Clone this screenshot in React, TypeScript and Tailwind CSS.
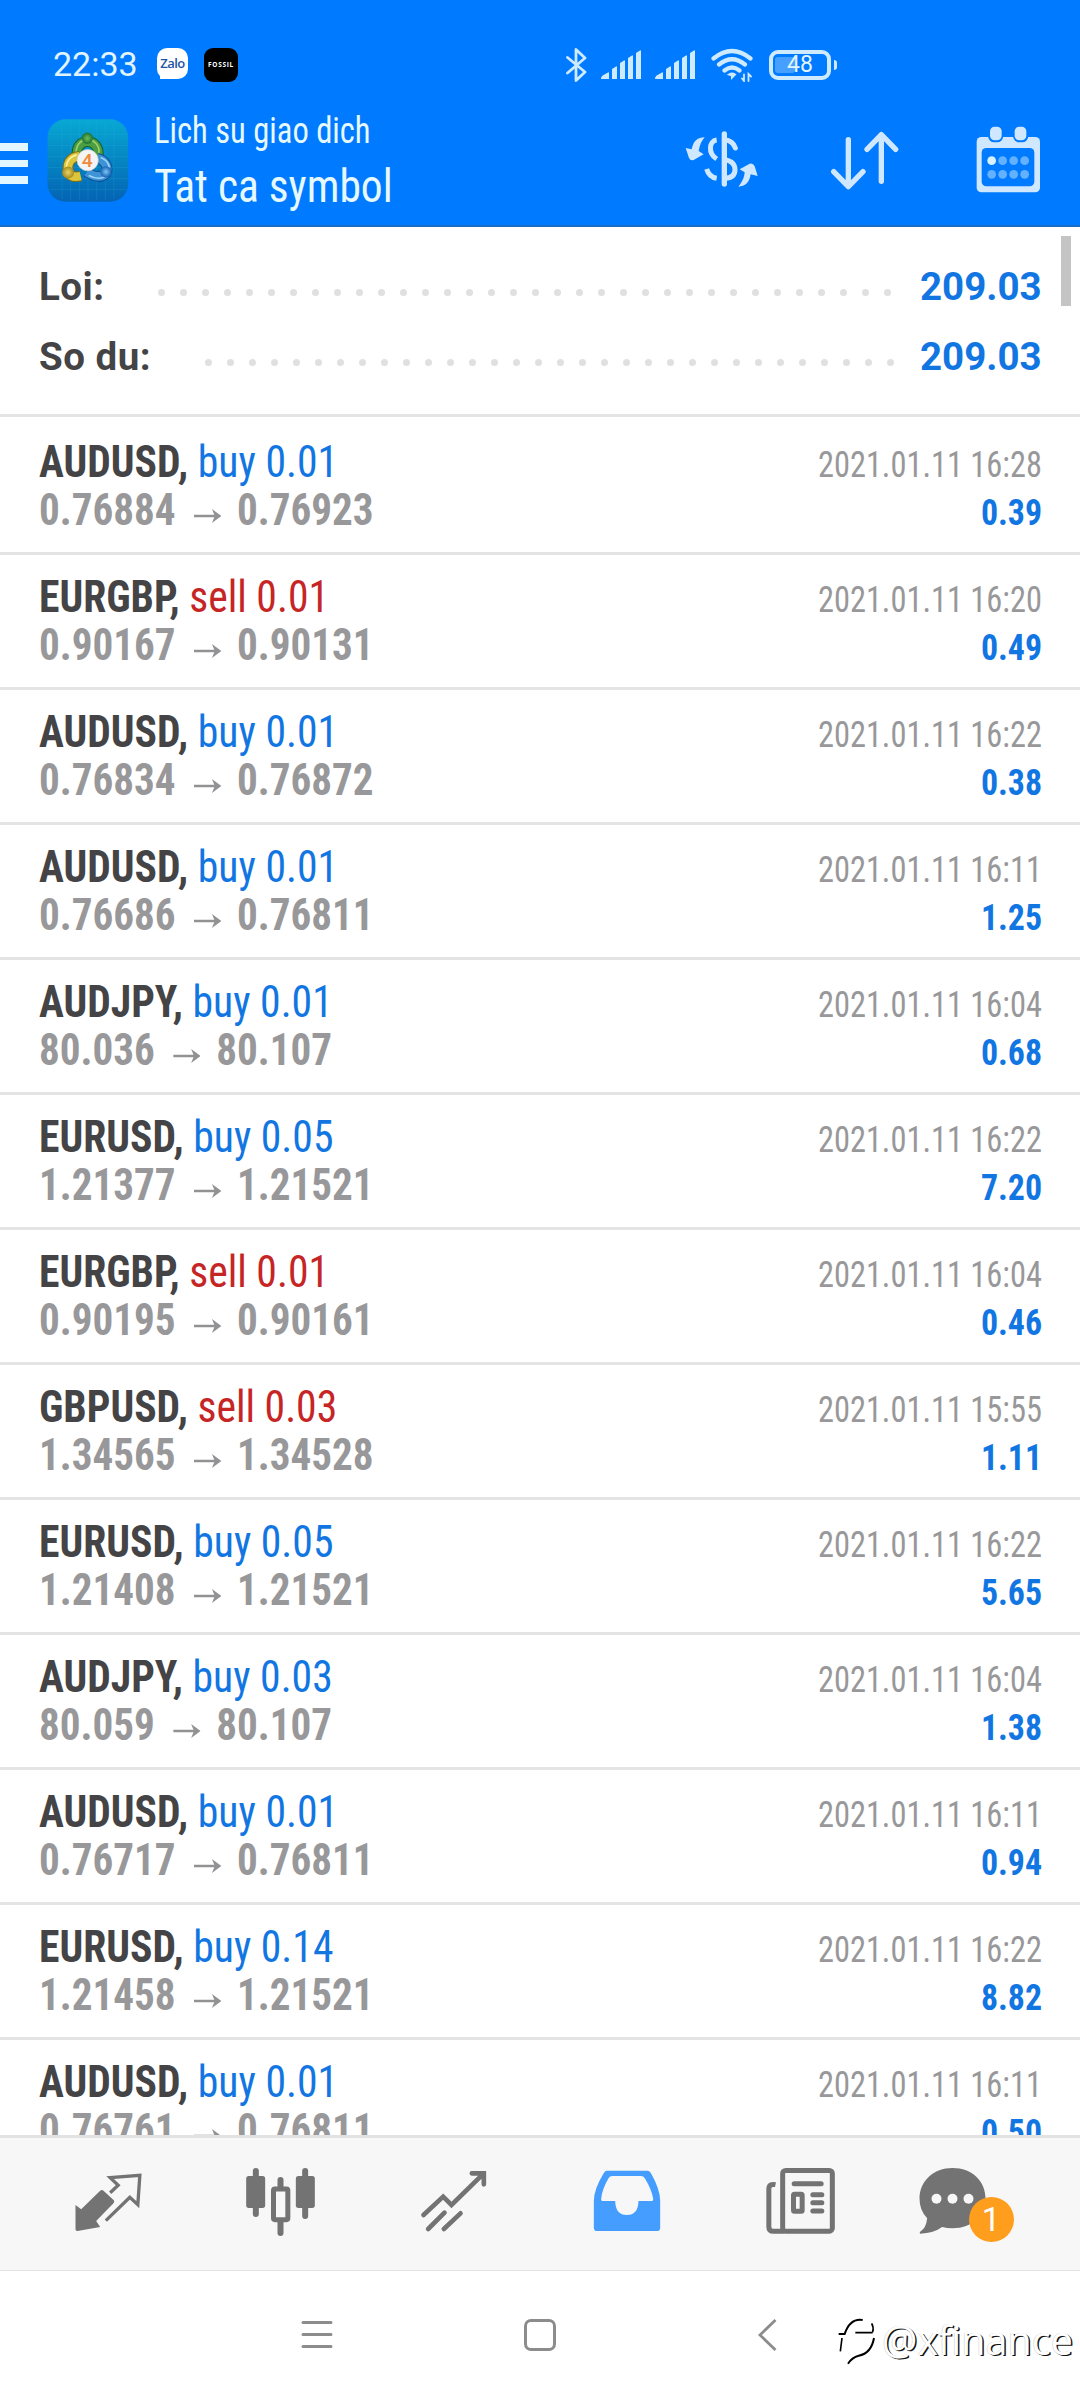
import type { ReactNode } from "react";

type Deal = {
  symbol: string;
  side: "buy" | "sell";
  lots: string;
  open: string;
  close: string;
  time: string;
  profit: string;
};

const deals: Deal[] = [
  { symbol: "AUDUSD", side: "buy", lots: "0.01", open: "0.76884", close: "0.76923", time: "16:28", profit: "0.39" },
  { symbol: "EURGBP", side: "sell", lots: "0.01", open: "0.90167", close: "0.90131", time: "16:20", profit: "0.49" },
  { symbol: "AUDUSD", side: "buy", lots: "0.01", open: "0.76834", close: "0.76872", time: "16:22", profit: "0.38" },
  { symbol: "AUDUSD", side: "buy", lots: "0.01", open: "0.76686", close: "0.76811", time: "16:11", profit: "1.25" },
  { symbol: "AUDJPY", side: "buy", lots: "0.01", open: "80.036", close: "80.107", time: "16:04", profit: "0.68" },
  { symbol: "EURUSD", side: "buy", lots: "0.05", open: "1.21377", close: "1.21521", time: "16:22", profit: "7.20" },
  { symbol: "EURGBP", side: "sell", lots: "0.01", open: "0.90195", close: "0.90161", time: "16:04", profit: "0.46" },
  { symbol: "GBPUSD", side: "sell", lots: "0.03", open: "1.34565", close: "1.34528", time: "15:55", profit: "1.11" },
  { symbol: "EURUSD", side: "buy", lots: "0.05", open: "1.21408", close: "1.21521", time: "16:22", profit: "5.65" },
  { symbol: "AUDJPY", side: "buy", lots: "0.03", open: "80.059", close: "80.107", time: "16:04", profit: "1.38" },
  { symbol: "AUDUSD", side: "buy", lots: "0.01", open: "0.76717", close: "0.76811", time: "16:11", profit: "0.94" },
  { symbol: "EURUSD", side: "buy", lots: "0.14", open: "1.21458", close: "1.21521", time: "16:22", profit: "8.82" },
  { symbol: "AUDUSD", side: "buy", lots: "0.01", open: "0.76761", close: "0.76811", time: "16:11", profit: "0.50" },
];

function AppLogo() {
  return (
    <svg className="h-[83px] w-[82px]" viewBox="143 298 246 250">
      <defs>
        <linearGradient id="tile" x1="0" y1="0" x2="0" y2="1">
          <stop offset="0" stopColor="#08a8d4" />
          <stop offset="0.5" stopColor="#0585c2" />
          <stop offset="1" stopColor="#0463b4" />
        </linearGradient>
        <radialGradient id="green"><stop offset="0" stopColor="#6fbf5b" /><stop offset="1" stopColor="#1d7232" /></radialGradient>
        <radialGradient id="gold"><stop offset="0" stopColor="#e9d568" /><stop offset="1" stopColor="#a58a1c" /></radialGradient>
        <radialGradient id="sky"><stop offset="0" stopColor="#7cc8f5" /><stop offset="1" stopColor="#1761b4" /></radialGradient>
      </defs>
      <rect x="144" y="299" width="243" height="248" rx="54" fill="url(#tile)" />
      <path d="M188 306v234M214 302v242M240 302v242M266 302v242M292 302v242M318 302v242M344 306v234M150 345h232M146 378h240M146 411h240M146 444h240M146 477h240M150 510h232" stroke="#36b5dc" strokeOpacity="0.28" strokeWidth="2" />
      <g fill="none">
        <path d="M233 412C230 384 242 366 264 366S300 384 297 412" stroke="#13602f" strokeWidth="32" />
        <path d="M233 412C230 384 242 366 264 366S300 384 297 412" stroke="#4c9e42" strokeWidth="26" />
        <path d="M230 408C228 380 242 360 264 360S302 380 299 400" stroke="#9dcf6a" strokeWidth="5" />
        <path d="M240 410C212 412 200 434 208 462Q218 476 244 470" stroke="#7f6d14" strokeWidth="32" />
        <path d="M240 410C212 412 200 434 208 462Q218 476 244 470" stroke="#dcc53a" strokeWidth="26" />
        <path d="M232 406C206 412 196 436 204 456" stroke="#fbf0a0" strokeWidth="5" />
        <path d="M294 416C318 422 330 444 320 462Q300 482 262 458" stroke="#0f4f94" strokeWidth="32" />
        <path d="M294 416C318 422 330 444 320 462Q300 482 262 458" stroke="#3d93d6" strokeWidth="26" />
        <path d="M304 414C330 424 336 446 324 466Q304 486 268 468" stroke="#9cd4f6" strokeWidth="5" />
      </g>
      <circle cx="264" cy="356" r="17" fill="url(#green)" />
      <circle cx="206" cy="459" r="18" fill="url(#gold)" />
      <circle cx="320" cy="457" r="17" fill="url(#sky)" />
      <circle cx="265" cy="422" r="32" fill="#f4f4f4" stroke="#c9cdc9" strokeWidth="2" />
      <text x="264" y="443" textAnchor="middle" fontFamily="Roboto" fontSize="58" fontWeight="500" fill="#f0893c">4</text>
    </svg>
  );
}

function Signal() {
  return (
    <svg className="h-[30px] w-[40px]" viewBox="0 0 40 30" fill="#cdeaff">
      <path d="M0 29q0-3 3-4.200l4-2.300q1-.6 1 .5V29zM11 19l4-2.500q1-.5 1 .7V29h-5zM19 13l4-2.500q1-.5 1 .7V29h-5zM27 8l4-2.500q1-.5 1 .7V29h-5zM35 3l4-2.500q1-.5 1 .7V29h-5z" />
    </svg>
  );
}

function StatusBar() {
  return (
    <div className="flex h-[100px] items-center pt-[29px] text-[#e2f5ff]">
      <span className="-mt-[1px] ml-[53px] w-[104px] shrink-0 font-['Roboto'] text-[34px] font-[450] leading-[40px]">22:33</span>
      <div className="relative -mt-[3px] h-[31px] w-[31px] rounded-[10px] bg-white text-center font-['Open_Sans'] text-[13px] font-semibold leading-[31px] tracking-[-0.5px] text-[#1c55a5]">
        Zalo
        <span className="absolute bottom-0 left-[3px] h-[3px] w-[6px] bg-white" />
      </div>
      <div className="ml-[16px] h-[34px] w-[34px] rounded-[9px] bg-black text-center font-['Open_Sans'] text-[6.500px] font-bold leading-[34px] tracking-[0.7px] text-white">
        FOSSIL
      </div>
      <svg className="ml-[328px] h-[36px] w-[21px] shrink-0" viewBox="0 0 21 36" fill="none" stroke="#cdeaff" strokeWidth="2.800" strokeLinecap="round" strokeLinejoin="round">
        <path d="M1.500 10.500 19 25l-9 8.500V2.500L19 11 1.500 26" />
      </svg>
      <div className="ml-[14px] shrink-0"><Signal /></div>
      <div className="ml-[14px] shrink-0"><Signal /></div>
      <svg className="ml-[16px] h-[34px] w-[43px] shrink-0" viewBox="0 0 43 34" fill="none" stroke="#cdeaff" strokeWidth="4.200" strokeLinecap="round">
        <path d="M2.500 10.500q18.500-15 37 0M8 16.500q13-10.500 26 0M13.500 22.500q7.500-6 15 0" />
        <path d="M21 27.500l-3-1q3-2 6 0l-3 3z" fill="#cdeaff" strokeWidth="2" />
        <path d="M33 26.500v6.500l-2-2.500M37.500 33v-7l2.500 2.500" strokeWidth="1.800" />
      </svg>
      <div className="relative ml-[15px] flex h-[30px] w-[62px] shrink-0 items-center justify-center rounded-[9px] border-4 border-[#cdeaff]">
        <span className="absolute left-[2px] top-[3px] h-[16px] w-[20px] rounded-[3px] bg-[#46a0ff]" />
        <span className="relative font-['Roboto'] text-[23px] leading-[24px]">48</span>
      </div>
      <span className="ml-[3px] h-[10px] w-[3px] rounded-r bg-[#cdeaff]" />
    </div>
  );
}

function Header() {
  return (
    <header className="h-[227px] shrink-0 border-b-2 border-[#1a6cc4] bg-[#007aff]">
      <StatusBar />
      <div className="flex h-[125px]">
        <div className="mt-[43px] flex w-[28px] shrink-0 flex-col gap-[9px]">
          <span className="h-[7.500px] bg-[#e2f7ff]" />
          <span className="h-[7.500px] bg-[#e2f7ff]" />
          <span className="h-[7.500px] bg-[#e2f7ff]" />
        </div>
        <div className="ml-[19px] mt-[19px] w-[82px] shrink-0"><AppLogo /></div>
        <div className="ml-[25px] w-[300px] shrink-0 whitespace-nowrap font-['Roboto_Condensed'] font-[450] text-[#e6f9ff]">
          <div className="mt-[9px] w-max origin-left scale-x-[0.88] text-[37px] leading-[44px]">Lich su giao dich</div>
          <div className="mt-[9px] w-max origin-left scale-x-[0.945] text-[46px] leading-[48px]">Tat ca symbol</div>
        </div>
        <svg className="ml-[230px] mt-[27px] h-[64px] w-[76px] shrink-0" viewBox="43 52 228 192" fill="#cfe8ff">
          <path d="M105 83C84 84 72 92 66 119L48 115 58 145Q62 154 72 151L102 134 87 124C90 106 96 93 105 83z" />
          <path d="M206 231C227 230 239 220 243 194L264 199 255 170Q251 160 240 162L210 179 225 188C224 204 216 220 206 231z" />
          <g fill="none" stroke="#cfe8ff" strokeLinecap="round">
            <path d="M164 73V223" strokeWidth="16" />
            <path d="M141 91C118 94 114 130 141 148" strokeWidth="15" strokeLinecap="butt" />
            <path d="M111 178Q118 202 141 206" strokeWidth="15" strokeLinecap="butt" />
            <path d="M164 90Q190 92 197 115M166 150Q196 156 196 180T166 206" strokeWidth="15" />
          </g>
        </svg>
        <svg className="ml-[69px] mt-[29px] h-[64px] w-[72px] shrink-0" viewBox="478 57 216 192" fill="none" stroke="#cfe8ff" strokeWidth="16" strokeLinecap="round" strokeLinejoin="round">
          <path d="M536 89V229M492 185L536 230 580 185M635 214V74M592 118L635 74 678 118" />
        </svg>
        <svg className="ml-[74px] mt-[26px] h-[68px] w-[66px] shrink-0" viewBox="916 48 198 204">
          <rect x="921" y="81" width="190" height="166" rx="14" fill="#cfe8ff" />
          <rect x="936" y="114" width="158" height="115" rx="14" fill="#007aff" />
          <rect x="955" y="44" width="46" height="53" rx="19" fill="#007aff" />
          <rect x="1030" y="44" width="46" height="53" rx="19" fill="#007aff" />
          <rect x="961" y="50" width="35" height="41" rx="14" fill="#cfe8ff" />
          <rect x="1035" y="50" width="35" height="41" rx="14" fill="#cfe8ff" />
          <g fill="#64b2ff">
            <circle cx="966" cy="152" r="13" fill="#d8f2ff" />
            <circle cx="999" cy="152" r="13" /><circle cx="1032" cy="152" r="13" /><circle cx="1065" cy="152" r="13" />
            <circle cx="966" cy="193" r="13" /><circle cx="999" cy="193" r="13" /><circle cx="1032" cy="193" r="13" /><circle cx="1065" cy="193" r="13" />
          </g>
        </svg>
      </div>
    </header>
  );
}

function SummaryLine({ label, value, dots, className }: { label: string; value: string; dots: number; className: string }) {
  return (
    <div className="flex h-[70px] items-center pl-[39px] pr-[39px] font-['Roboto'] text-[38.500px] font-bold leading-[46px]">
      <span className="whitespace-nowrap tracking-[0.500px] text-[#444446]">{label}</span>
      <span className={className}>
        {Array.from({ length: dots }, (_, i) => (
          <i key={i} className="size-[7px] rounded-full bg-[#e0e0e0]" />
        ))}
      </span>
      <span className="w-[121px] text-right text-[#1276e2]">{value}</span>
    </div>
  );
}

function Arrow() {
  return (
    <svg className="ml-[19px] mr-[17px] mt-[9px] h-[14px] w-[29px]" viewBox="0 0 29 14" fill="none" stroke="#929294" strokeWidth="2.600">
      <path d="M0 7H25" />
      <path d="M19 0l10 7-10 7 3-7z" fill="#929294" stroke="none" />
    </svg>
  );
}

function DealRow({ deal }: { deal: Deal }) {
  const sideColor = deal.side === "buy" ? "text-[#1276e2]" : "text-[#c62526]";
  return (
    <div className="flex h-[135px] shrink-0 justify-between whitespace-nowrap border-t-[3px] border-[#e4e4e4] pl-[39px] pr-[38px] font-['Roboto_Condensed'] first:border-transparent">
      <div className="w-[420px] pt-[19px] text-[43.500px] leading-[48px]">
        <div className="w-max origin-left scale-x-[0.957]">
          <span className="font-bold text-[#444446]">{deal.symbol},</span>
          <span className={sideColor}> {deal.side} {deal.lots}</span>
        </div>
        <div className="flex w-max origin-left scale-x-[0.945] items-center font-bold text-[#98989a]">
          <span>{deal.open}</span>
          <Arrow />
          <span>{deal.close}</span>
        </div>
      </div>
      <div className="flex flex-col items-end pt-[21px] text-[36px] leading-[48px]">
        <span className="origin-right scale-x-[0.9] text-[#98989a]">2021.01.11 {deal.time}</span>
        <span className="origin-right scale-x-[0.94] font-bold text-[#1276e2]">{deal.profit}</span>
      </div>
    </div>
  );
}

function NavCell({ children }: { children: ReactNode }) {
  return <div className="flex w-[173px] shrink-0 items-center justify-center">{children}</div>;
}

function BottomNav() {
  return (
    <nav className="flex h-[135px] shrink-0 border-t-[3px] border-[#e2e2e2] bg-[#f7f7f7] pl-[21px]">
      <NavCell>
        <svg className="size-[80px]" viewBox="25.5 42 240 240">
          <path d="M48 165L65 178 122 122Q127 118 132 122L163 151Q166 155 162 160L110 213 122 231 54 243Q47 243 48 237z" fill="#737373" />
          <path d="M152 128L176 106 152 83 241 76 235 164 211 142 139 212" fill="none" stroke="#737373" strokeWidth="10" />
        </svg>
      </NavCell>
      <NavCell>
        <svg className="size-[80px]" viewBox="544.5 42 240 240">
          <g stroke="#737373" strokeWidth="18" strokeLinecap="round"><path d="M589 63V192M737 63V198M663 90V110M663 214V249" /></g>
          <rect x="560" y="78" width="57" height="96" rx="8" fill="#737373" />
          <rect x="709" y="78" width="57" height="96" rx="8" fill="#737373" />
          <rect x="642" y="117" width="43" height="92" rx="4" fill="#f7f7f7" stroke="#737373" strokeWidth="15" />
        </svg>
      </NavCell>
      <NavCell>
        <svg className="size-[80px]" viewBox="1063.5 42 240 240" fill="none" stroke="#737373" strokeWidth="14" strokeLinecap="round">
          <path d="M1092 195L1151 140 1176 165 1272 71M1237 70H1273V103M1106 237L1155 188M1153 237L1203 190" />
        </svg>
      </NavCell>
      <NavCell>
        <svg className="size-[80px]" viewBox="22.5 42 240 240">
          <path d="M82 62H203Q210 62 214 69Q242 118 242 153V233Q242 243 232 243H53Q43 243 43 233V153Q43 118 73 69Q77 62 82 62z" fill="#449dff" />
          <path d="M98 78H184Q192 78 196 85Q216 118 221 146Q222 153 215 153H177Q176 195 142 195T107 153H71Q64 153 65 146Q68 118 87 85Q91 78 98 78z" fill="#f7f7f7" />
        </svg>
      </NavCell>
      <NavCell>
        <svg className="size-[80px]" viewBox="541.5 42 240 240" fill="none" stroke="#737373">
          <rect x="609.5" y="61.5" width="149" height="182" rx="9" strokeWidth="15" />
          <path d="M588 104Q568 100 568 118V230Q568 244 582 244H615" strokeWidth="15" />
          <path d="M644 101H725M700 134H727M700 158H727M700 183H727" strokeWidth="15" strokeLinecap="round" />
          <rect x="642" y="133" width="26" height="51" rx="3" strokeWidth="15" />
        </svg>
      </NavCell>
      <NavCell>
        <div className="relative h-[80px] w-[110px]">
          <svg className="h-[80px] w-[110px]" viewBox="1015.5 42 330 240">
            <path d="M1119 54C1178 54 1218 94 1218 145S1178 235 1119 235Q1102 235 1088 231Q1062 250 1022 251Q1019 248 1022 245Q1040 235 1043 205Q1020 182 1020 145C1020 94 1062 54 1119 54z" fill="#737373" />
            <g fill="#f7f7f7"><circle cx="1071" cy="146" r="15" /><circle cx="1119" cy="146" r="15" /><circle cx="1167" cy="146" r="15" /></g>
          </svg>
          <span className="absolute left-[51px] top-[33px] flex size-[45px] items-center justify-center rounded-full bg-[#ff9d1c] font-['Roboto'] text-[33px] leading-none text-white">1</span>
        </div>
      </NavCell>
    </nav>
  );
}

function SystemBar() {
  return (
    <div className="relative h-[130px] shrink-0 border-t border-[#e2e2e2] bg-white">
      <div className="flex h-[127px] items-center">
        <svg className="ml-[300px] h-[34px] w-[34px]" viewBox="0 0 34 34" stroke="#8c8c8c" strokeWidth="3" strokeLinecap="round"><path d="M3 4.500H31M3 16.500H31M3 28.500H31" /></svg>
        <div className="ml-[190px] h-[32px] w-[32px] rounded-[7px] border-[3px] border-[#8c8c8c]" />
        <svg className="ml-[201px] h-[34px] w-[22px]" viewBox="0 0 22 34" fill="none" stroke="#8c8c8c" strokeWidth="2.800"><path d="M18.500 2L3 17 18.500 32" /></svg>
      </div>
      <div className="absolute left-[836px] top-[44px] flex items-center">
        <svg className="h-[54px] w-[46px]" viewBox="50 25 138 162" fill="none" stroke="#000">
          <path d="M58 82H76Q92 34 130 40" strokeWidth="6" />
          <path d="M108 78H160M160 76Q164 62 157 50" strokeWidth="5" />
          <path d="M68 94L63 134" strokeWidth="5" />
          <path d="M164 94Q156 140 118 147Q98 152 86 171" strokeWidth="6" />
        </svg>
        <span className="-mt-[4px] whitespace-nowrap font-['Open_Sans'] text-[39.500px] leading-[48px] text-white [text-shadow:1.5px_1px_0_#111,-0.5px_-0.2px_0_#ccc]">@xfinance</span>
      </div>
    </div>
  );
}

export default function App() {
  return (
    <div className="flex h-[2400px] w-[1080px] flex-col overflow-hidden bg-white">
      <Header />
      <section className="relative h-[190px] shrink-0 border-b-[3px] border-[#e4e4e4] pt-[25px]">
        <SummaryLine label="Loi:" value="209.03" dots={34} className="ml-auto mr-[29px] mt-[11px] flex w-[733px] shrink-0 justify-between" />
        <SummaryLine label="So du:" value="209.03" dots={32} className="ml-auto mr-[26px] mt-[11px] flex w-[689px] shrink-0 justify-between" />
        <div className="absolute left-[1061px] top-[9px] h-[70px] w-[10px] bg-[#c4c4c4]" />
      </section>
      <main className="flex h-[1718px] shrink-0 flex-col overflow-hidden">
        {deals.map((deal, i) => (
          <DealRow key={i} deal={deal} />
        ))}
      </main>
      <BottomNav />
      <SystemBar />
    </div>
  );
}
